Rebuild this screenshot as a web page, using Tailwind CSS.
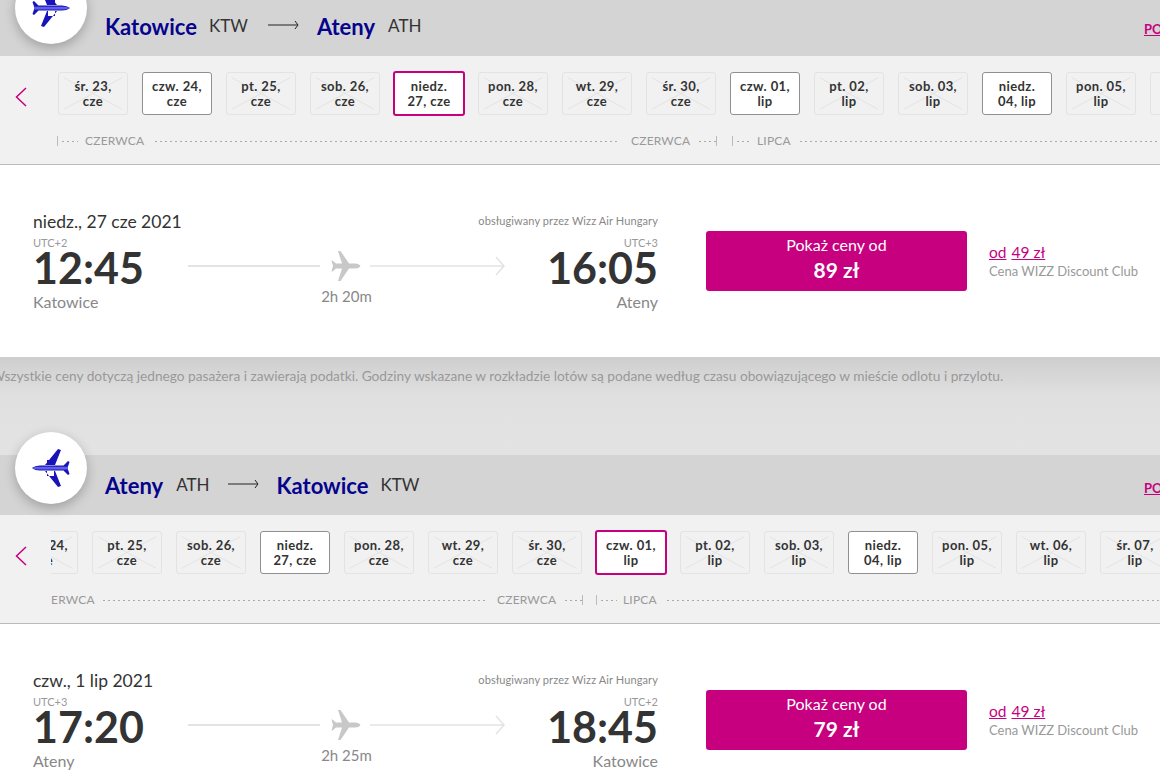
<!DOCTYPE html>
<html lang="pl"><head><meta charset="utf-8"><script src="https://cdn.jsdelivr.net/npm/@tailwindcss/browser@4"></script></head>
<body class="bg-[#e3e3e3] font-['Lato','Noto_Sans',sans-serif] overflow-hidden">
<div class="h-[783px] w-[1160px] overflow-hidden relative">
<section class="mt-[-4px]">
  <header class="h-[60px] bg-[#d4d4d4] relative flex items-center pl-[105px]">
    <div class="absolute left-[15px] top-[-24px] w-[72px] h-[72px] rounded-full bg-white shadow-[0_4px_12px_rgba(0,0,0,.25)] flex items-center justify-center">
      <svg class="-scale-x-100 ml-[-3px]" width="55" height="55" viewBox="0 0 55 55"><path d="M20 24 33 8l3 1-6 15zM20 30l13 16 3-1-6-15zM22 19h7v5h-7zM22 30h7v5h-7zM38 25l5-5 1.500 1-2 6 2 6-1.500 1-5-5zM7 27q3-2.500 8-2.500h27v5H15q-5 0-8-2.500z" fill="#1a14b8"/><path d="M7 27q3-1.300 8-1.300h28v2.800H15q-5 0-8-1.500z" fill="#5f5fe8"/></svg>
    </div>
    <span class="text-[22px] font-bold text-[#06038d]">Katowice</span><span class="ml-[12px] text-[17px] text-[#333]">KTW</span>
    <svg class="ml-[20px] mb-[3px]" width="31" height="10" viewBox="0 0 31 10"><path d="M0 5h30M27 1l3 4-3 4" fill="none" stroke="#222"/></svg>
    <span class="ml-[18px] text-[22px] font-bold text-[#06038d]">Ateny</span><span class="ml-[13px] text-[17px] text-[#333]">ATH</span>
    <a class="absolute left-[1144px] top-[24px] text-[13px] font-bold text-[#c6007e] underline">POKAŻ</a>
  </header>
  <div class="h-[109px] bg-[#f1f1f1] border-b border-[#bbb] flex">
    <div class="w-[51px] shrink-0 flex pl-[15px] pt-[31px]"><svg width="12" height="20" viewBox="0 0 12 20"><path d="M11 1 1.500 10l9.500 9" fill="none" stroke="#c6007e" stroke-width="1.500"/></svg></div>
    <div class="overflow-hidden flex-1 pt-[15px]">
      <div class="flex gap-[14px] pl-[7px] w-[1400px] text-[13px] leading-[15px] font-bold text-[#333] tracking-[.4px] text-center">
        <div class="relative w-[70px] h-[43px] mt-px rounded-[3px] border border-[#e3e3e3] flex items-center justify-center"><svg class="absolute inset-0 w-full h-full" viewBox="0 0 70 43" preserveAspectRatio="none"><path d="M5 5l60 33M65 5 5 38" stroke="#e2e2e2"/></svg><span class="relative">śr. 23,<br>cze</span></div>
        <div class="w-[70px] h-[43px] mt-px rounded-[3px] border border-[#909090] bg-white flex items-center justify-center"><span>czw. 24,<br>cze</span></div>
        <div class="relative w-[70px] h-[43px] mt-px rounded-[3px] border border-[#e3e3e3] flex items-center justify-center"><svg class="absolute inset-0 w-full h-full" viewBox="0 0 70 43" preserveAspectRatio="none"><path d="M5 5l60 33M65 5 5 38" stroke="#e2e2e2"/></svg><span class="relative">pt. 25,<br>cze</span></div>
        <div class="relative w-[70px] h-[43px] mt-px rounded-[3px] border border-[#e3e3e3] flex items-center justify-center"><svg class="absolute inset-0 w-full h-full" viewBox="0 0 70 43" preserveAspectRatio="none"><path d="M5 5l60 33M65 5 5 38" stroke="#e2e2e2"/></svg><span class="relative">sob. 26,<br>cze</span></div>
        <div class="w-[72px] h-[45px] -mx-px rounded-[3px] border-2 border-[#c6007e] bg-white flex items-center justify-center"><span>niedz.<br>27, cze</span></div>
        <div class="relative w-[70px] h-[43px] mt-px rounded-[3px] border border-[#e3e3e3] flex items-center justify-center"><svg class="absolute inset-0 w-full h-full" viewBox="0 0 70 43" preserveAspectRatio="none"><path d="M5 5l60 33M65 5 5 38" stroke="#e2e2e2"/></svg><span class="relative">pon. 28,<br>cze</span></div>
        <div class="relative w-[70px] h-[43px] mt-px rounded-[3px] border border-[#e3e3e3] flex items-center justify-center"><svg class="absolute inset-0 w-full h-full" viewBox="0 0 70 43" preserveAspectRatio="none"><path d="M5 5l60 33M65 5 5 38" stroke="#e2e2e2"/></svg><span class="relative">wt. 29,<br>cze</span></div>
        <div class="relative w-[70px] h-[43px] mt-px rounded-[3px] border border-[#e3e3e3] flex items-center justify-center"><svg class="absolute inset-0 w-full h-full" viewBox="0 0 70 43" preserveAspectRatio="none"><path d="M5 5l60 33M65 5 5 38" stroke="#e2e2e2"/></svg><span class="relative">śr. 30,<br>cze</span></div>
        <div class="w-[70px] h-[43px] mt-px rounded-[3px] border border-[#909090] bg-white flex items-center justify-center"><span>czw. 01,<br>lip</span></div>
        <div class="relative w-[70px] h-[43px] mt-px rounded-[3px] border border-[#e3e3e3] flex items-center justify-center"><svg class="absolute inset-0 w-full h-full" viewBox="0 0 70 43" preserveAspectRatio="none"><path d="M5 5l60 33M65 5 5 38" stroke="#e2e2e2"/></svg><span class="relative">pt. 02,<br>lip</span></div>
        <div class="relative w-[70px] h-[43px] mt-px rounded-[3px] border border-[#e3e3e3] flex items-center justify-center"><svg class="absolute inset-0 w-full h-full" viewBox="0 0 70 43" preserveAspectRatio="none"><path d="M5 5l60 33M65 5 5 38" stroke="#e2e2e2"/></svg><span class="relative">sob. 03,<br>lip</span></div>
        <div class="w-[70px] h-[43px] mt-px rounded-[3px] border border-[#909090] bg-white flex items-center justify-center"><span>niedz.<br>04, lip</span></div>
        <div class="relative w-[70px] h-[43px] mt-px rounded-[3px] border border-[#e3e3e3] flex items-center justify-center"><svg class="absolute inset-0 w-full h-full" viewBox="0 0 70 43" preserveAspectRatio="none"><path d="M5 5l60 33M65 5 5 38" stroke="#e2e2e2"/></svg><span class="relative">pon. 05,<br>lip</span></div>
        <div class="relative w-[70px] h-[43px] mt-px rounded-[3px] border border-[#e3e3e3]"></div>
      </div>
      <div class="flex items-center h-[14px] mt-[18px] ml-[6px] text-[12px] text-[#999] tracking-[.2px] w-[1200px]">
        <i class="w-px h-[10px] bg-[#bbb]"></i><i class="ml-[4px] w-[16px] h-px bg-[repeating-linear-gradient(90deg,#aaa_0,#aaa_2px,transparent_2px,transparent_5px)]"></i>
        <span class="ml-[7px] w-[59px]">CZERWCA</span><i class="ml-[11px] w-[465px] h-px bg-[repeating-linear-gradient(90deg,#aaa_0,#aaa_2px,transparent_2px,transparent_5px)]"></i>
        <span class="ml-[11px] w-[59px]">CZERWCA</span><i class="ml-[9px] w-[17px] h-px bg-[repeating-linear-gradient(90deg,#aaa_0,#aaa_2px,transparent_2px,transparent_5px)]"></i><i class="w-px h-[10px] bg-[#bbb]"></i>
        <i class="ml-[15px] w-px h-[10px] bg-[#bbb]"></i><i class="ml-[4px] w-[13px] h-px bg-[repeating-linear-gradient(90deg,#aaa_0,#aaa_2px,transparent_2px,transparent_5px)]"></i>
        <span class="ml-[7px] w-[35px]">LIPCA</span><i class="ml-[8px] w-[360px] h-px bg-[repeating-linear-gradient(90deg,#aaa_0,#aaa_2px,transparent_2px,transparent_5px)]"></i>
      </div>
    </div>
  </div>
  <div class="h-[192px] bg-white flex pl-[33px] relative">
    <div class="w-[625px] shrink-0 pt-[46px]">
      <div class="flex justify-between items-end h-[22px]"><span class="text-[17.500px] leading-[22px] text-[#333]">niedz., 27 cze 2021</span><span class="text-[11px] leading-[14px] tracking-[.1px] text-[#888] pb-[5px]">obsługiwany przez Wizz Air Hungary</span></div>
      <div class="flex items-start">
        <div class="w-[155px] shrink-0"><div class="text-[11px] leading-[9px] text-[#999] mt-[5px]">UTC+2</div><div class="text-[43px] leading-[42px] font-bold text-[#333]">12:45</div><div class="text-[16px] leading-[20px] text-[#888] mt-[3px]">Katowice</div></div>
        <div class="w-[317px] shrink-0 flex flex-col items-center pt-[18px]">
          <div class="flex items-center w-full h-[30px]"><i class="w-[132px] h-[2px] bg-[#e3e3e3]"></i><svg class="ml-[11px] mr-[10px] shrink-0" width="30" height="30" viewBox="0 0 30 30"><path d="M29.500 15Q28 12.500 24 12.500H18L9.500 0H7l4 12.500H5L1.500 9.500h-1L2 15 .5 20.500h1l3.500-3h6L7 30h2.500L18 17.500h6q4 0 5.500-2.500z" fill="#c8c8c8"/></svg><svg class="shrink-0 ml-[-1px]" width="135" height="20" viewBox="0 0 135 20"><path d="M0 10h134M126 1l8 9-8 9" fill="none" stroke="#e3e3e3" stroke-width="1.500"/></svg></div>
          <div class="text-[15px] leading-[20px] text-[#888] mt-[5px]">2h 20m</div>
        </div>
        <div class="w-[153px] shrink-0 text-right"><div class="text-[11px] leading-[9px] text-[#999] mt-[5px]">UTC+3</div><div class="text-[43px] leading-[42px] font-bold text-[#333]">16:05</div><div class="text-[16px] leading-[20px] text-[#888] mt-[3px]">Ateny</div></div>
      </div>
    </div>
    <div class="ml-[48px] mt-[66px] w-[261px] h-[60px] bg-[#c6007e] rounded-[3px] text-white text-center pt-[4px]"><div class="text-[16px] leading-[20px]">Pokaż ceny od</div><div class="text-[21px] leading-[26px] font-bold mt-[2px]">89 zł</div></div>
    <div class="ml-[22px] mt-[77px]"><div class="text-[15.500px] leading-[20px] text-[#c6007e]"><span class="underline">od</span><span class="underline ml-[5px]">49 zł</span></div><div class="text-[13px] leading-[16px] text-[#999] mt-[1px]">Cena WIZZ Discount Club</div></div>
  </div>
</section>
<div class="h-[98px] bg-[linear-gradient(#cecece,#e0e0e0_40%,#e3e3e3)] overflow-hidden"><p class="text-[13.700px] text-[#999] whitespace-nowrap pt-[9px] ml-[-9px]">Wszystkie ceny dotyczą jednego pasażera i zawierają podatki. Godziny wskazane w rozkładzie lotów są podane według czasu obowiązującego w mieście odlotu i przylotu.</p></div>
<section>
  <header class="h-[60px] bg-[#d4d4d4] relative flex items-center pl-[105px]">
    <div class="absolute left-[15px] top-[-23px] w-[72px] h-[72px] rounded-full bg-white shadow-[0_4px_12px_rgba(0,0,0,.25)] flex items-center justify-center">
      <svg class="ml-[3px]" width="55" height="55" viewBox="0 0 55 55"><path d="M20 24 33 8l3 1-6 15zM20 30l13 16 3-1-6-15zM22 19h7v5h-7zM22 30h7v5h-7zM38 25l5-5 1.500 1-2 6 2 6-1.500 1-5-5zM7 27q3-2.500 8-2.500h27v5H15q-5 0-8-2.500z" fill="#1a14b8"/><path d="M7 27q3-1.300 8-1.300h28v2.800H15q-5 0-8-1.500z" fill="#5f5fe8"/></svg>
    </div>
    <span class="text-[22px] font-bold text-[#06038d]">Ateny</span><span class="ml-[13px] text-[17px] text-[#333]">ATH</span>
    <svg class="ml-[18px] mb-[3px]" width="31" height="10" viewBox="0 0 31 10"><path d="M0 5h30M27 1l3 4-3 4" fill="none" stroke="#222"/></svg>
    <span class="ml-[18px] text-[22px] font-bold text-[#06038d]">Katowice</span><span class="ml-[12px] text-[17px] text-[#333]">KTW</span>
    <a class="absolute left-[1144px] top-[24px] text-[13px] font-bold text-[#c6007e] underline">POKAŻ</a>
  </header>
  <div class="h-[109px] bg-[#f1f1f1] border-b border-[#bbb] flex">
    <div class="w-[51px] shrink-0 flex pl-[15px] pt-[31px]"><svg width="12" height="20" viewBox="0 0 12 20"><path d="M11 1 1.500 10l9.500 9" fill="none" stroke="#c6007e" stroke-width="1.500"/></svg></div>
    <div class="overflow-hidden flex-1 pt-[15px]">
      <div class="flex gap-[14px] ml-[-43px] w-[1400px] text-[13px] leading-[15px] font-bold text-[#333] tracking-[.4px] text-center">
        <div class="relative w-[70px] h-[43px] mt-px rounded-[3px] border border-[#e3e3e3] flex items-center justify-center"><svg class="absolute inset-0 w-full h-full" viewBox="0 0 70 43" preserveAspectRatio="none"><path d="M5 5l60 33M65 5 5 38" stroke="#e2e2e2"/></svg><span class="relative">czw. 24,<br>cze</span></div>
        <div class="relative w-[70px] h-[43px] mt-px rounded-[3px] border border-[#e3e3e3] flex items-center justify-center"><svg class="absolute inset-0 w-full h-full" viewBox="0 0 70 43" preserveAspectRatio="none"><path d="M5 5l60 33M65 5 5 38" stroke="#e2e2e2"/></svg><span class="relative">pt. 25,<br>cze</span></div>
        <div class="relative w-[70px] h-[43px] mt-px rounded-[3px] border border-[#e3e3e3] flex items-center justify-center"><svg class="absolute inset-0 w-full h-full" viewBox="0 0 70 43" preserveAspectRatio="none"><path d="M5 5l60 33M65 5 5 38" stroke="#e2e2e2"/></svg><span class="relative">sob. 26,<br>cze</span></div>
        <div class="w-[70px] h-[43px] mt-px rounded-[3px] border border-[#909090] bg-white flex items-center justify-center"><span>niedz.<br>27, cze</span></div>
        <div class="relative w-[70px] h-[43px] mt-px rounded-[3px] border border-[#e3e3e3] flex items-center justify-center"><svg class="absolute inset-0 w-full h-full" viewBox="0 0 70 43" preserveAspectRatio="none"><path d="M5 5l60 33M65 5 5 38" stroke="#e2e2e2"/></svg><span class="relative">pon. 28,<br>cze</span></div>
        <div class="relative w-[70px] h-[43px] mt-px rounded-[3px] border border-[#e3e3e3] flex items-center justify-center"><svg class="absolute inset-0 w-full h-full" viewBox="0 0 70 43" preserveAspectRatio="none"><path d="M5 5l60 33M65 5 5 38" stroke="#e2e2e2"/></svg><span class="relative">wt. 29,<br>cze</span></div>
        <div class="relative w-[70px] h-[43px] mt-px rounded-[3px] border border-[#e3e3e3] flex items-center justify-center"><svg class="absolute inset-0 w-full h-full" viewBox="0 0 70 43" preserveAspectRatio="none"><path d="M5 5l60 33M65 5 5 38" stroke="#e2e2e2"/></svg><span class="relative">śr. 30,<br>cze</span></div>
        <div class="w-[72px] h-[45px] -mx-px rounded-[3px] border-2 border-[#c6007e] bg-white flex items-center justify-center"><span>czw. 01,<br>lip</span></div>
        <div class="relative w-[70px] h-[43px] mt-px rounded-[3px] border border-[#e3e3e3] flex items-center justify-center"><svg class="absolute inset-0 w-full h-full" viewBox="0 0 70 43" preserveAspectRatio="none"><path d="M5 5l60 33M65 5 5 38" stroke="#e2e2e2"/></svg><span class="relative">pt. 02,<br>lip</span></div>
        <div class="relative w-[70px] h-[43px] mt-px rounded-[3px] border border-[#e3e3e3] flex items-center justify-center"><svg class="absolute inset-0 w-full h-full" viewBox="0 0 70 43" preserveAspectRatio="none"><path d="M5 5l60 33M65 5 5 38" stroke="#e2e2e2"/></svg><span class="relative">sob. 03,<br>lip</span></div>
        <div class="w-[70px] h-[43px] mt-px rounded-[3px] border border-[#909090] bg-white flex items-center justify-center"><span>niedz.<br>04, lip</span></div>
        <div class="relative w-[70px] h-[43px] mt-px rounded-[3px] border border-[#e3e3e3] flex items-center justify-center"><svg class="absolute inset-0 w-full h-full" viewBox="0 0 70 43" preserveAspectRatio="none"><path d="M5 5l60 33M65 5 5 38" stroke="#e2e2e2"/></svg><span class="relative">pon. 05,<br>lip</span></div>
        <div class="relative w-[70px] h-[43px] mt-px rounded-[3px] border border-[#e3e3e3] flex items-center justify-center"><svg class="absolute inset-0 w-full h-full" viewBox="0 0 70 43" preserveAspectRatio="none"><path d="M5 5l60 33M65 5 5 38" stroke="#e2e2e2"/></svg><span class="relative">wt. 06,<br>lip</span></div>
        <div class="relative w-[70px] h-[43px] mt-px rounded-[3px] border border-[#e3e3e3] flex items-center justify-center"><svg class="absolute inset-0 w-full h-full" viewBox="0 0 70 43" preserveAspectRatio="none"><path d="M5 5l60 33M65 5 5 38" stroke="#e2e2e2"/></svg><span class="relative">śr. 07,<br>lip</span></div>
      </div>
      <div class="flex items-center h-[14px] mt-[18px] text-[12px] text-[#999] tracking-[.2px] w-[1200px]">
        <span class="w-[43px]">ERWCA</span><i class="ml-[9px] w-[383px] h-px bg-[repeating-linear-gradient(90deg,#aaa_0,#aaa_2px,transparent_2px,transparent_5px)]"></i>
        <span class="ml-[11px] w-[59px]">CZERWCA</span><i class="ml-[9px] w-[17px] h-px bg-[repeating-linear-gradient(90deg,#aaa_0,#aaa_2px,transparent_2px,transparent_5px)]"></i><i class="w-px h-[10px] bg-[#bbb]"></i>
        <i class="ml-[13px] w-px h-[10px] bg-[#bbb]"></i><i class="ml-[4px] w-[16px] h-px bg-[repeating-linear-gradient(90deg,#aaa_0,#aaa_2px,transparent_2px,transparent_5px)]"></i>
        <span class="ml-[6px] w-[35px]">LIPCA</span><i class="ml-[9px] w-[500px] h-px bg-[repeating-linear-gradient(90deg,#aaa_0,#aaa_2px,transparent_2px,transparent_5px)]"></i>
      </div>
    </div>
  </div>
  <div class="h-[192px] bg-white flex pl-[33px] relative">
    <div class="w-[625px] shrink-0 pt-[46px]">
      <div class="flex justify-between items-end h-[22px]"><span class="text-[17.500px] leading-[22px] text-[#333]">czw., 1 lip 2021</span><span class="text-[11px] leading-[14px] tracking-[.1px] text-[#888] pb-[5px]">obsługiwany przez Wizz Air Hungary</span></div>
      <div class="flex items-start">
        <div class="w-[155px] shrink-0"><div class="text-[11px] leading-[9px] text-[#999] mt-[5px]">UTC+3</div><div class="text-[43px] leading-[42px] font-bold text-[#333]">17:20</div><div class="text-[16px] leading-[20px] text-[#888] mt-[3px]">Ateny</div></div>
        <div class="w-[317px] shrink-0 flex flex-col items-center pt-[18px]">
          <div class="flex items-center w-full h-[30px]"><i class="w-[132px] h-[2px] bg-[#e3e3e3]"></i><svg class="ml-[11px] mr-[10px] shrink-0" width="30" height="30" viewBox="0 0 30 30"><path d="M29.500 15Q28 12.500 24 12.500H18L9.500 0H7l4 12.500H5L1.500 9.500h-1L2 15 .5 20.500h1l3.500-3h6L7 30h2.500L18 17.500h6q4 0 5.500-2.500z" fill="#c8c8c8"/></svg><svg class="shrink-0 ml-[-1px]" width="135" height="20" viewBox="0 0 135 20"><path d="M0 10h134M126 1l8 9-8 9" fill="none" stroke="#e3e3e3" stroke-width="1.500"/></svg></div>
          <div class="text-[15px] leading-[20px] text-[#888] mt-[5px]">2h 25m</div>
        </div>
        <div class="w-[153px] shrink-0 text-right"><div class="text-[11px] leading-[9px] text-[#999] mt-[5px]">UTC+2</div><div class="text-[43px] leading-[42px] font-bold text-[#333]">18:45</div><div class="text-[16px] leading-[20px] text-[#888] mt-[3px]">Katowice</div></div>
      </div>
    </div>
    <div class="ml-[48px] mt-[66px] w-[261px] h-[60px] bg-[#c6007e] rounded-[3px] text-white text-center pt-[4px]"><div class="text-[16px] leading-[20px]">Pokaż ceny od</div><div class="text-[21px] leading-[26px] font-bold mt-[2px]">79 zł</div></div>
    <div class="ml-[22px] mt-[77px]"><div class="text-[15.500px] leading-[20px] text-[#c6007e]"><span class="underline">od</span><span class="underline ml-[5px]">49 zł</span></div><div class="text-[13px] leading-[16px] text-[#999] mt-[1px]">Cena WIZZ Discount Club</div></div>
  </div>
</section>
</div>
</body></html>
